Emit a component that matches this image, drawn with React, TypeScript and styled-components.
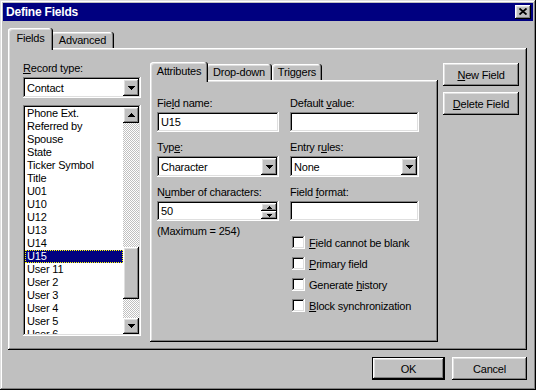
import React from "react";
import styled, { createGlobalStyle, css } from "styled-components";

const GlobalStyle = createGlobalStyle`
  html, body {
    margin: 0;
    padding: 0;
    background: #c0c0c0;
  }
  * {
    box-sizing: border-box;
  }
`;

// bevels
const raised = css`
  box-shadow: inset -1px -1px #000, inset 1px 1px #fff, inset -2px -2px #808080,
    inset 2px 2px #dfdfdf;
`;

const sunken = css`
  box-shadow: inset -1px -1px #fff, inset 1px 1px #808080, inset -2px -2px #dfdfdf,
    inset 2px 2px #000;
`;

// Styled Components
const Window = styled.div`
  width: 536px;
  height: 390px;
  padding: 3px;
  background: #c0c0c0;
  box-shadow: inset -1px -1px #000, inset 1px 1px #dfdfdf, inset -2px -2px #808080,
    inset 2px 2px #fff;
  display: flex;
  flex-direction: column;
  font-family: "Liberation Sans", Arial, sans-serif;
  font-size: 11px;
  letter-spacing: -0.2px;
  color: #000;
`;

const TitleBar = styled.div`
  height: 18px;
  flex: 0 0 18px;
  background: #000080;
  color: #fff;
  display: flex;
  align-items: center;
  justify-content: space-between;
  padding: 0 2px 0 3px;
  font-weight: bold;
  font-size: 12px;
`;

const CloseButton = styled.div`
  width: 16px;
  height: 14px;
  background: #c0c0c0;
  ${raised}
  display: flex;
  align-items: center;
  justify-content: center;
  padding-bottom: 1px;
`;

const Body = styled.div`
  flex: 1;
  display: flex;
  flex-direction: column;
  padding: 7px 6px 0 5px;
`;

const TabStrip = styled.div<{ $h: number }>`
  height: ${(p) => p.$h}px;
  flex: 0 0 ${(p) => p.$h}px;
  display: flex;
  align-items: flex-end;
  padding-left: 2px;
`;

const Tab = styled.div<{ $active?: boolean; $w: number }>`
  position: relative;
  z-index: ${(p) => (p.$active ? 2 : 1)};
  width: ${(p) => (p.$active ? p.$w + 4 : p.$w)}px;
  height: ${(p) => (p.$active ? "calc(100% + 2px)" : "16px")};
  margin: ${(p) => (p.$active ? "0 -2px -2px" : "0")};
  padding-bottom: ${(p) => (p.$active ? "2px" : "0")};
  background: #c0c0c0;
  border-radius: 3px 3px 0 0;
  box-shadow: inset -1px 0 #000, inset 1px 1px #fff, inset -2px 0 #808080,
    inset 2px 2px #dfdfdf;
  display: flex;
  align-items: center;
  justify-content: center;
  white-space: nowrap;
`;

const Panel = styled.div<{ $h: number }>`
  height: ${(p) => p.$h}px;
  flex: 0 0 ${(p) => p.$h}px;
  background: #c0c0c0;
  ${raised}
`;

const OuterPanel = styled(Panel)`
  display: flex;
  align-items: flex-start;
  padding: 14px 8px 0 15px;
`;

const LeftColumn = styled.div`
  width: 118px;
  display: flex;
  flex-direction: column;
`;

const Label = styled.div`
  line-height: 13px;
  height: 13px;
  white-space: nowrap;
`;

const U = styled.span`
  text-decoration: underline;
  text-underline-offset: 1px;
`;

const Combo = styled.div<{ $mt?: number }>`
  height: 21px;
  margin-top: ${(p) => p.$mt ?? 0}px;
  background: #fff;
  ${sunken}
  padding: 2px;
  display: flex;
  align-items: center;
`;

const FieldText = styled.div`
  flex: 1;
  padding-left: 2px;
  white-space: nowrap;
`;

const ArrowButton = styled.div<{ $h: number }>`
  width: 16px;
  height: ${(p) => p.$h}px;
  background: #c0c0c0;
  ${raised}
  display: flex;
  align-items: center;
  justify-content: center;
`;

const ListBox = styled.div`
  margin-top: 7px;
  height: 231px;
  background: #fff;
  ${sunken}
  padding: 2px;
  display: flex;
`;

const ListItems = styled.div`
  flex: 1;
  overflow: hidden;
`;

const ListItem = styled.div<{ $selected?: boolean }>`
  height: 13px;
  line-height: 13px;
  padding-left: 2px;
  white-space: nowrap;
  background: ${(p) => (p.$selected ? "#000080" : "transparent")};
  color: ${(p) => (p.$selected ? "#fff" : "#000")};
  outline: ${(p) => (p.$selected ? "1px dotted #ffff00" : "none")};
  outline-offset: -1px;
`;

const ScrollBar = styled.div`
  width: 16px;
  display: flex;
  flex-direction: column;
`;

const ScrollTrack = styled.div`
  flex: 1;
  background: repeating-conic-gradient(#fff 0 25%, #c0c0c0 0 50%) 0 0 / 2px 2px;
`;

const Thumb = styled.div`
  margin-top: 124px;
  height: 52px;
  background: #c0c0c0;
  ${raised}
`;

const TabControl = styled.div`
  width: 288px;
  margin-left: 9px;
  display: flex;
  flex-direction: column;
`;

const InnerPanel = styled(Panel)`
  display: grid;
  grid-template-columns: 122px 129px;
  column-gap: 11px;
  align-items: start;
  padding: 17px 0 0 7px;
`;

const Column = styled.div`
  display: flex;
  flex-direction: column;
  gap: 9px;
`;

const Group = styled.div`
  display: flex;
  flex-direction: column;
  gap: 2px;
`;

const Edit = styled.div`
  height: 20px;
  background: #fff;
  ${sunken}
  padding: 2px;
  display: flex;
  align-items: center;
`;

const Spinner = styled.div`
  width: 16px;
  display: flex;
  flex-direction: column;
`;

const Note = styled.div`
  line-height: 13px;
  margin-top: -5px;
`;

const CheckList = styled.div`
  margin-top: 6px;
  display: flex;
  flex-direction: column;
  gap: 8px;
`;

const CheckRow = styled.div`
  height: 13px;
  display: flex;
  align-items: center;
  padding-left: 2px;
  white-space: nowrap;
`;

const CheckBox = styled.div`
  width: 13px;
  height: 13px;
  background: #fff;
  ${sunken}
  margin-right: 4px;
`;

const ButtonColumn = styled.div`
  width: 76px;
  margin-left: 5px;
  margin-top: 1px;
  display: flex;
  flex-direction: column;
  gap: 6px;
`;

const PushButton = styled.div<{ $w?: number; $default?: boolean }>`
  width: ${(p) => (p.$w ? `${p.$w}px` : "100%")};
  height: 23px;
  background: #c0c0c0;
  display: flex;
  align-items: center;
  justify-content: center;
  white-space: nowrap;
  ${(p) =>
    p.$default
      ? css`
          box-shadow: inset -2px -2px #000, inset 1px 1px #000, inset 2px 2px #fff,
            inset -3px -3px #808080, inset 3px 3px #dfdfdf;
        `
      : raised}
`;

const Footer = styled.div`
  margin-top: 7px;
  display: flex;
  justify-content: flex-end;
  gap: 7px;
`;

// glyphs
const Down = () => (
  <svg width="7" height="4" viewBox="0 0 7 4">
    <path d="M0 0H7V1H6V2H5V3H4V4H3V3H2V2H1V1H0Z" fill="#000" />
  </svg>
);

const Up = () => (
  <svg width="7" height="4" viewBox="0 0 7 4">
    <path d="M0 4H7V3H6V2H5V1H4V0H3V1H2V2H1V3H0Z" fill="#000" />
  </svg>
);

const SmallUp = () => (
  <svg width="5" height="3" viewBox="0 0 5 3">
    <path d="M0 3H5V2H4V1H3V0H2V1H1V2H0Z" fill="#000" />
  </svg>
);

const SmallDown = () => (
  <svg width="5" height="3" viewBox="0 0 5 3">
    <path d="M0 0H5V1H4V2H3V3H2V2H1V1H0Z" fill="#000" />
  </svg>
);

const CloseGlyph = () => (
  <svg width="8" height="7" viewBox="0 0 8 7">
    <path d="M0.5 0.5L7.5 6.5M7.5 0.5L0.5 6.5" stroke="#000" strokeWidth="1.8" />
  </svg>
);

const records = [
  "Phone Ext.",
  "Referred by",
  "Spouse",
  "State",
  "Ticker Symbol",
  "Title",
  "U01",
  "U10",
  "U12",
  "U13",
  "U14",
  "U15",
  "User 11",
  "User 2",
  "User 3",
  "User 4",
  "User 5",
  "User 6",
];

const checks: [string, string, string][] = [
  ["", "F", "ield cannot be blank"],
  ["", "P", "rimary field"],
  ["Generate ", "h", "istory"],
  ["", "B", "lock synchronization"],
];

// Component
const App = () => {
  return (
    <>
      <GlobalStyle />
      <Window>
        <TitleBar>
          <span>Define Fields</span>
          <CloseButton>
            <CloseGlyph />
          </CloseButton>
        </TitleBar>

        <Body>
          {/* Outer tabs */}
          <TabStrip $h={20}>
            <Tab $active $w={41}>Fields</Tab>
            <Tab $w={63}>Advanced</Tab>
          </TabStrip>

          <OuterPanel $h={302}>
            {/* Record type + list */}
            <LeftColumn>
              <Label>
                <U>R</U>ecord type:
              </Label>
              <Combo $mt={2}>
                <FieldText>Contact</FieldText>
                <ArrowButton $h={17}>
                  <Down />
                </ArrowButton>
              </Combo>
              <ListBox>
                <ListItems>
                  {records.map((r) => (
                    <ListItem key={r} $selected={r === "U15"}>
                      {r}
                    </ListItem>
                  ))}
                </ListItems>
                <ScrollBar>
                  <ArrowButton $h={16}>
                    <Up />
                  </ArrowButton>
                  <ScrollTrack>
                    <Thumb />
                  </ScrollTrack>
                  <ArrowButton $h={16}>
                    <Down />
                  </ArrowButton>
                </ScrollBar>
              </ListBox>
            </LeftColumn>

            {/* Inner tabs */}
            <TabControl>
              <TabStrip $h={18}>
                <Tab $active $w={54}>Attributes</Tab>
                <Tab $w={66}>Drop-down</Tab>
                <Tab $w={50}>Triggers</Tab>
              </TabStrip>
              <InnerPanel $h={262}>
                <Column>
                  <Group>
                    <Label>
                      Fie<U>l</U>d name:
                    </Label>
                    <Edit>
                      <FieldText>U15</FieldText>
                    </Edit>
                  </Group>
                  <Group>
                    <Label>
                      Typ<U>e</U>:
                    </Label>
                    <Combo>
                      <FieldText>Character</FieldText>
                      <ArrowButton $h={17}>
                        <Down />
                      </ArrowButton>
                    </Combo>
                  </Group>
                  <Group>
                    <Label>
                      N<U>u</U>mber of characters:
                    </Label>
                    <Edit>
                      <FieldText>50</FieldText>
                      <Spinner>
                        <ArrowButton $h={8}>
                          <SmallUp />
                        </ArrowButton>
                        <ArrowButton $h={8}>
                          <SmallDown />
                        </ArrowButton>
                      </Spinner>
                    </Edit>
                  </Group>
                  <Note>(Maximum = 254)</Note>
                </Column>

                <Column>
                  <Group>
                    <Label>
                      Default <U>v</U>alue:
                    </Label>
                    <Edit />
                  </Group>
                  <Group>
                    <Label>
                      Entry r<U>u</U>les:
                    </Label>
                    <Combo>
                      <FieldText>None</FieldText>
                      <ArrowButton $h={17}>
                        <Down />
                      </ArrowButton>
                    </Combo>
                  </Group>
                  <Group>
                    <Label>
                      Field <U>f</U>ormat:
                    </Label>
                    <Edit />
                  </Group>
                  <CheckList>
                    {checks.map(([pre, key, rest]) => (
                      <CheckRow key={key}>
                        <CheckBox />
                        <span>
                          {pre}
                          <U>{key}</U>
                          {rest}
                        </span>
                      </CheckRow>
                    ))}
                  </CheckList>
                </Column>
              </InnerPanel>
            </TabControl>

            {/* Side buttons */}
            <ButtonColumn>
              <PushButton>
                <U>N</U>ew Field
              </PushButton>
              <PushButton>
                <U>D</U>elete Field
              </PushButton>
            </ButtonColumn>
          </OuterPanel>

          <Footer>
            <PushButton $w={73} $default>
              OK
            </PushButton>
            <PushButton $w={75}>Cancel</PushButton>
          </Footer>
        </Body>
      </Window>
    </>
  );
};

export default App;
